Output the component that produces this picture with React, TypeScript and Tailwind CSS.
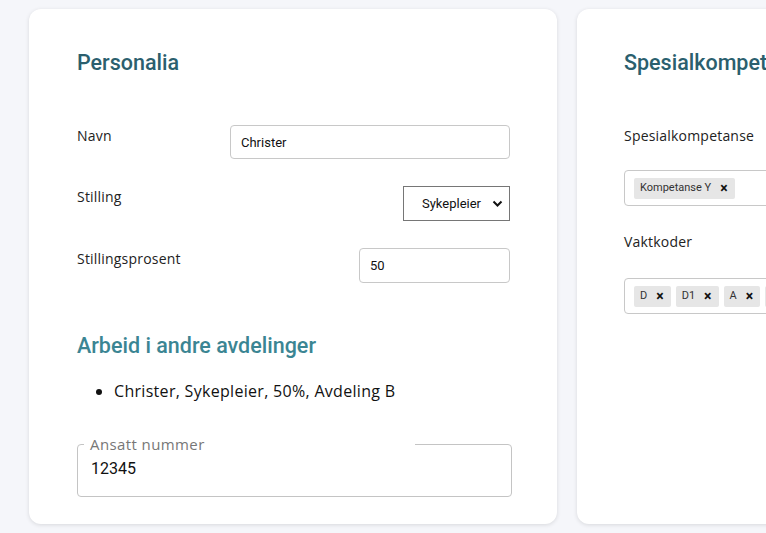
import React from 'react';

const labelFont = { fontFamily: '"Open Sans", "Liberation Sans", sans-serif' };

const Chip = ({ text }: { text: string }) => (
  <span className="inline-flex items-center h-[21px] bg-[#e6e6e6] rounded-[2px] pl-[6px] pr-[7px] text-[11px] text-[#333] font-['Roboto',sans-serif]">
    {text}
    <span className="ml-[9px] text-[14px] font-bold text-[#111] leading-none">×</span>
  </span>
);

const FormRow = ({ label, children }: { label: string; children: React.ReactNode }) => (
  <div className="flex items-start justify-between">
    <div className="text-[14px] text-[#222] tracking-[0.2px]" style={labelFont}>{label}</div>
    {children}
  </div>
);

export default function App() {
  return (
    <div className="w-full h-[533px] overflow-hidden bg-[#f5f6fa]">
      <div className="flex gap-[20px] pt-[9px] pl-[29px] w-max">
        {/* Personalia */}
        <div className="w-[528px] h-[515px] bg-white rounded-[12px] shadow-[0_1px_4px_rgba(0,0,0,0.12)] pl-[48px] pr-[47px] pt-[31px]">
          <h2 className="text-[21.5px] font-medium text-[#2b5f6e] font-['Roboto',sans-serif] leading-[46px]">Personalia</h2>
          <div className="mt-[39px] flex flex-col gap-[27px]">
            <FormRow label="Navn">
              <input
                defaultValue="Christer"
                className="w-[280px] h-[34px] border border-[#c8c8c8] rounded-[4px] px-[10px] text-[13px] text-[#111] font-['Roboto',sans-serif] outline-none"
              />
            </FormRow>
            <FormRow label="Stilling">
              <div className="relative w-[107px] h-[35px] border border-[#767676] flex items-center justify-end pr-[28px] text-[13px] text-[#111] font-['Roboto',sans-serif]">
                Sykepleier
                <svg className="absolute right-[6px] top-[13px]" width="11" height="8" viewBox="0 0 11 8">
                  <path d="M1.5 1.5 L5.5 5.5 L9.5 1.5" fill="none" stroke="#111" strokeWidth="2" />
                </svg>
              </div>
            </FormRow>
            <FormRow label="Stillingsprosent">
              <input
                defaultValue="50"
                className="w-[151px] h-[35px] border border-[#c8c8c8] rounded-[4px] px-[10px] text-[13px] text-[#111] font-['Roboto',sans-serif] outline-none"
              />
            </FormRow>
          </div>

          <h3 className="mt-[40px] text-[21.5px] font-medium text-[#3b8593] font-['Roboto',sans-serif] leading-[46px]">Arbeid i andre avdelinger</h3>
          <ul className="mt-[10px] list-disc pl-[37px] text-[16px] text-[#111] tracking-[0.3px]" style={labelFont}>
            <li>Christer, Sykepleier, 50%, Avdeling B</li>
          </ul>

          <fieldset className="mt-[34px] w-[435px] h-[60px] border border-[#c4c4c4] rounded-[4px] px-[12px] pb-[8px]">
            <legend className="ml-[-6px] w-[331px] pl-[6px] pr-[4px] text-[15px] text-[#777] leading-[14px] tracking-[0.4px]" style={labelFont}>
              Ansatt nummer
            </legend>
            <div className="mt-[6px] text-[16px] text-[#111] font-['Roboto',sans-serif] pl-[1px]">12345</div>
          </fieldset>
        </div>

        {/* Spesialkompetanse */}
        <div className="w-[528px] h-[515px] bg-white rounded-[12px] shadow-[0_1px_4px_rgba(0,0,0,0.12)] px-[47px] pt-[31px]">
          <h2 className="text-[21.5px] font-medium text-[#2b5f6e] font-['Roboto',sans-serif] leading-[46px] whitespace-nowrap">Spesialkompetanse</h2>
          <div className="mt-[39px] text-[14px] text-[#222] tracking-[0.2px]" style={labelFont}>Spesialkompetanse</div>
          <div className="mt-[24px] h-[36px] border border-[#c8c8c8] rounded-[4px] flex items-center gap-[5px] px-[9px]">
            <Chip text="Kompetanse Y" />
          </div>
          <div className="mt-[25px] text-[14px] text-[#222] tracking-[0.2px]" style={labelFont}>Vaktkoder</div>
          <div className="mt-[26px] h-[36px] border border-[#c8c8c8] rounded-[4px] flex items-center gap-[5px] px-[9px]">
            <Chip text="D" />
            <Chip text="D1" />
            <Chip text="A" />
            <Chip text="N" />
            <Chip text="K" />
          </div>
        </div>
      </div>
    </div>
  );
}
